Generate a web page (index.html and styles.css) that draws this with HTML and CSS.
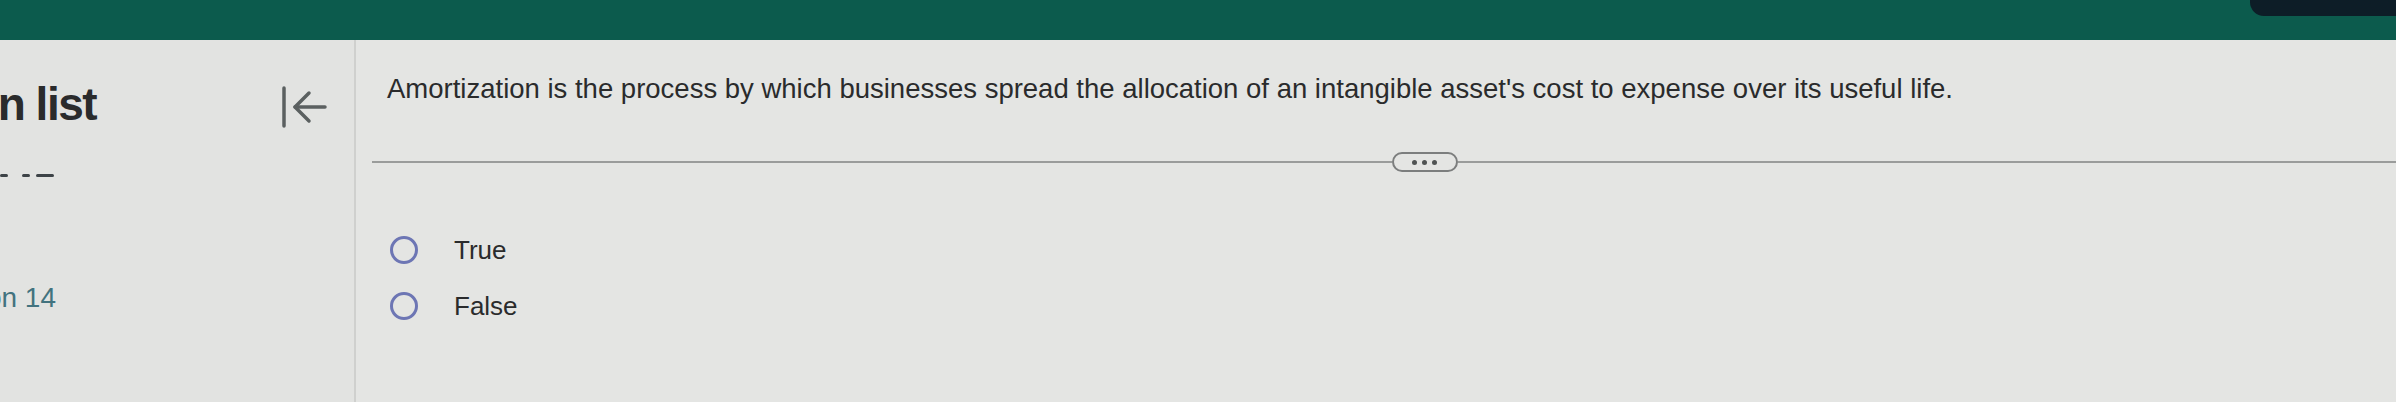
FILE: index.html
```html
<!DOCTYPE html>
<html lang="en">
<head>
  <meta charset="UTF-8" />
  <meta name="viewport" content="width=device-width, initial-scale=1.0"/>
  <title>Question 14</title>
  <link rel="stylesheet" href="styles.css">
</head>
<body>

  <header class="topbar">
    <div class="topbar-action"></div>
  </header>

  <div class="layout">
    <!-- Question list panel -->
    <aside class="sidebar">
      <div class="sidebar-head">
        <h2 class="sidebar-title">Question list</h2>
        <button class="collapse-btn" title="Collapse">
          <svg width="48" height="44" viewBox="0 0 48 44" fill="none" stroke="currentColor" stroke-width="3.5" stroke-linecap="round" stroke-linejoin="round">
            <line x1="4" y1="3" x2="4" y2="41"/>
            <line x1="15" y1="22" x2="45" y2="22"/>
            <polyline points="29,8 15,22 29,36"/>
          </svg>
        </button>
      </div>
      <div class="sidebar-marks"><span></span><span></span><span class="wide"></span></div>
      <div class="sidebar-item">Question 14</div>
    </aside>

    <!-- Current question -->
    <main class="question">
      <p class="question-text">Amortization is the process by which businesses spread the allocation of an intangible asset's cost to expense over its useful life.</p>

      <div class="divider">
        <span class="divider-line"></span>
        <button class="more-btn"><i></i><i></i><i></i></button>
        <span class="divider-line right"></span>
      </div>

      <ul class="choices">
        <li><span class="radio"></span>True</li>
        <li><span class="radio"></span>False</li>
      </ul>
    </main>
  </div>

</body>
</html>
```

FILE: styles.css
```css
body {
  font-family: 'Liberation Sans', Arial, sans-serif;
  background-color: #e4e5e3;
  color: #2e2f30;
  margin: 0;
  padding: 0;
  height: 402px;
  overflow: hidden;
  display: flex;
  flex-direction: column;
}

.topbar {
  height: 40px;
  background-color: #0c5b4d;
  display: flex;
  justify-content: flex-end;
  flex-shrink: 0;
}

.topbar-action {
  width: 146px;
  height: 16px;
  background-color: #0d1d27;
  border-bottom-left-radius: 14px;
}

.layout {
  flex: 1;
  display: flex;
}

/* Sidebar */
.sidebar {
  width: 354px;
  flex-shrink: 0;
  border-right: 2px solid #cfd0ce;
  background-color: #e2e3e1;
  overflow: hidden;
}

.sidebar-head {
  display: flex;
  align-items: flex-start;
  justify-content: space-between;
  padding: 41px 26px 0 0;
}

.sidebar-title {
  margin: 0 0 0 -163px;
  font-size: 46px;
  line-height: 1;
  font-weight: bold;
  letter-spacing: -1.5px;
  color: #2a2b2c;
  white-space: nowrap;
}

.collapse-btn {
  background: none;
  border: none;
  padding: 0;
  margin-top: 4px;
  color: #5b6060;
  display: flex;
  cursor: pointer;
}

.sidebar-marks {
  display: flex;
  gap: 14px;
  margin-top: 45px;
  height: 3px;
}

.sidebar-marks span {
  width: 8px;
  height: 3px;
  border-radius: 2px;
  background-color: #3d4347;
}

.sidebar-marks .wide {
  width: 18px;
  margin-left: -8px;
}

.sidebar-item {
  margin: 104px 0 0 -95px;
  font-size: 28px;
  line-height: 1.2;
  color: #42737f;
  white-space: nowrap;
}

/* Question */
.question {
  flex: 1;
  padding: 33px 0 0 31px;
}

.question-text {
  margin: 0;
  font-size: 27.5px;
  line-height: 32px;
  color: #2a2b2c;
}

.divider {
  display: flex;
  align-items: center;
  margin: 47px 0 0 -15px;
}

.divider-line {
  flex: 1;
  height: 2px;
  background-color: #9a9c9b;
}

.divider-line.right {
  flex: 0.92;
}

.more-btn {
  width: 66px;
  height: 20px;
  padding: 0;
  border: 2px solid #7c7e7e;
  border-radius: 10px;
  background: transparent;
  display: flex;
  align-items: center;
  justify-content: center;
  gap: 5px;
}

.more-btn i {
  width: 5px;
  height: 5px;
  border-radius: 50%;
  background-color: #505353;
}

.choices {
  list-style: none;
  margin: 58px 0 0 0;
  padding: 0 0 0 3px;
  display: flex;
  flex-direction: column;
  gap: 16px;
}

.choices li {
  display: flex;
  align-items: center;
  height: 40px;
  font-size: 26px;
  color: #2a2b2c;
}

.radio {
  width: 22px;
  height: 22px;
  border: 3px solid #6d76b4;
  border-radius: 50%;
  margin-right: 36px;
}
```
